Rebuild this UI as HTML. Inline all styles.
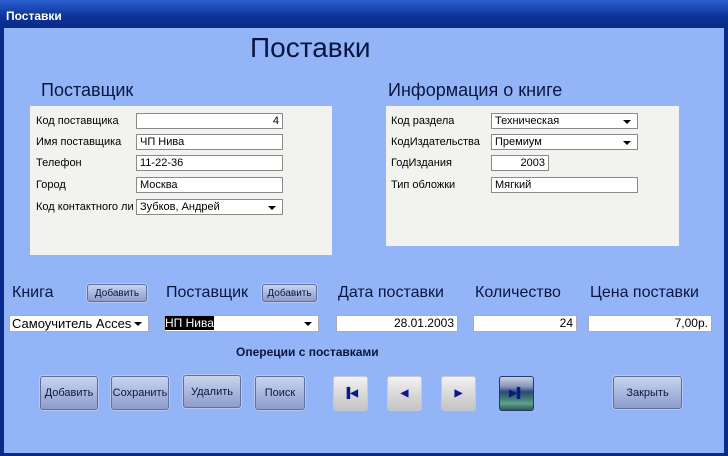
<!DOCTYPE html>
<html><head><meta charset="utf-8"><style>
*{margin:0;padding:0;box-sizing:border-box}
body{width:728px;height:456px;overflow:hidden;background:#0a2a8a;font-family:"Liberation Sans",sans-serif;position:relative}
.win{position:absolute;left:4px;top:28px;width:720px;height:425px;background:#93b5f7}
.tb{position:absolute;left:0;top:0;width:728px;height:28px;background:linear-gradient(#2d5fd0,#0b3296 60%,#0a2b84);color:#fff;font-weight:bold;font-size:12px;padding:9px 0 0 6px}
.a{position:absolute;white-space:nowrap}
.h{color:#0b1640;font-size:17px}
.p{position:absolute;background:#f2f3ef}
.l{position:absolute;font-size:11px;color:#000}
.i{position:absolute;background:#fff;border:1px solid #8a8a8a;font-size:11px;height:16px;line-height:14px;padding:0 3px;white-space:nowrap;overflow:hidden}
.r{text-align:right}
.dd::after{content:"";position:absolute;right:6px;top:6px;border-left:4px solid transparent;border-right:4px solid transparent;border-top:4px solid #000}
.b{position:absolute;border:1px solid #5e6f99;border-radius:3px;background:linear-gradient(#c9d4ec,#a9b8de 50%,#8d9ccb);font-size:11px;color:#0b1640;display:flex;align-items:center;justify-content:center;box-shadow:0 0 0 1px #b8c8f0}
.nb{position:absolute;border:1px solid #c5c8d4;border-radius:3px;background:linear-gradient(#f2f2f2,#d7d7d7 55%,#c4c4c4);display:flex;align-items:center;justify-content:center;color:#0a1a8a;font-size:10px;font-weight:bold}
</style></head><body>
<div class="tb">Поставки</div>
<div class="win"></div>
<div class="a" style="left:250px;top:32px;font-size:28px;color:#0b1640">Поставки</div>
<div class="a h" style="left:41px;top:80px;font-size:18px">Поставщик</div>
<div class="a h" style="left:388px;top:80px;font-size:18px">Информация о книге</div>

<div class="p" style="left:30px;top:106px;width:302px;height:149px"></div>
<div class="l" style="left:36px;top:115px">Код поставщика</div>
<div class="l" style="left:36px;top:136px">Имя поставщика</div>
<div class="l" style="left:36px;top:157px">Телефон</div>
<div class="l" style="left:36px;top:179px">Город</div>
<div class="l" style="left:36px;top:201px">Код контактного ли</div>
<div class="i r" style="left:136px;top:113px;width:147px">4</div>
<div class="i" style="left:136px;top:134px;width:147px">ЧП Нива</div>
<div class="i" style="left:136px;top:155px;width:147px">11-22-36</div>
<div class="i" style="left:136px;top:177px;width:147px">Москва</div>
<div class="i dd" style="left:136px;top:199px;width:147px">Зубков, Андрей</div>

<div class="p" style="left:386px;top:106px;width:293px;height:140px"></div>
<div class="l" style="left:391px;top:115px">Код раздела</div>
<div class="l" style="left:391px;top:136px">КодИздательства</div>
<div class="l" style="left:391px;top:157px">ГодИздания</div>
<div class="l" style="left:391px;top:179px">Тип обложки</div>
<div class="i dd" style="left:491px;top:113px;width:147px">Техническая</div>
<div class="i dd" style="left:491px;top:134px;width:147px">Премиум</div>
<div class="i r" style="left:491px;top:155px;width:58px">2003</div>
<div class="i" style="left:491px;top:177px;width:147px">Мягкий</div>

<div class="a h" style="left:12px;top:284px;font-size:16px">Книга</div>
<div class="b" style="left:87px;top:284px;width:60px;height:18px;font-size:10px">Добавить</div>
<div class="a h" style="left:166px;top:284px;font-size:16px">Поставщик</div>
<div class="b" style="left:262px;top:284px;width:55px;height:18px;font-size:10px">Добавить</div>
<div class="a h" style="left:338px;top:284px;font-size:16px">Дата поставки</div>
<div class="a h" style="left:475px;top:284px;font-size:16px">Количество</div>
<div class="a h" style="left:590px;top:284px;font-size:16px">Цена поставки</div>

<div class="i dd" style="left:9px;top:315px;width:140px;font-size:13px;height:17px;line-height:15px;padding:0 2px;border-color:#aab"><span style="display:block;width:120px;overflow:hidden">Самоучитель Access</span></div>
<div class="i dd" style="left:164px;top:315px;width:155px;height:17px;font-size:12px;line-height:15px;border-color:#aab;padding:0"><span style="background:#000;color:#fff">НП Нива</span></div>
<div class="i r" style="left:336px;top:315px;width:122px;font-size:12px;height:17px;border-color:#aab">28.01.2003</div>
<div class="i r" style="left:473px;top:315px;width:104px;font-size:12px;height:17px;border-color:#aab">24</div>
<div class="i r" style="left:588px;top:315px;width:124px;font-size:12px;height:17px;border-color:#aab">7,00р.</div>

<div class="a" style="left:236px;top:345px;font-size:12px;font-weight:bold;color:#0b1640">Опереции с поставками</div>

<div class="b" style="left:40px;top:376px;width:58px;height:34px">Добавить</div>
<div class="b" style="left:111px;top:376px;width:58px;height:34px">Сохранить</div>
<div class="b" style="left:183px;top:375px;width:58px;height:33px">Удалить</div>
<div class="b" style="left:255px;top:376px;width:50px;height:34px">Поиск</div>
<div class="nb" style="left:333px;top:376px;width:35px;height:35px">▐◀</div>
<div class="nb" style="left:387px;top:376px;width:35px;height:35px">◀</div>
<div class="nb" style="left:441px;top:376px;width:35px;height:35px">▶</div>
<div class="nb" style="left:499px;top:376px;width:35px;height:35px;border-color:#233a6a;background:linear-gradient(#c8cfe0,#8792b8 30%,#2c4a70 45%,#3f7a72 65%,#5fa090 80%,#2e5a50)">▶▌</div>
<div class="b" style="left:613px;top:376px;width:69px;height:33px">Закрыть</div>
</body></html>
